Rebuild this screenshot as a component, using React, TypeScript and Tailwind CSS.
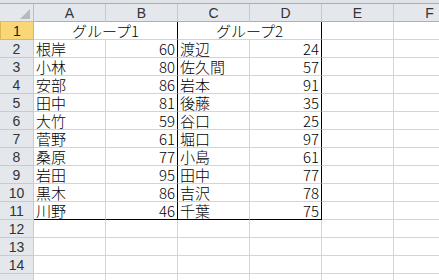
const G1: [string, number][] = [
  ['根岸', 60],
  ['小林', 80],
  ['安部', 86],
  ['田中', 81],
  ['大竹', 59],
  ['菅野', 61],
  ['桑原', 77],
  ['岩田', 95],
  ['黒木', 86],
  ['川野', 46],
]

const G2: [string, number][] = [
  ['渡辺', 24],
  ['佐久間', 57],
  ['岩本', 91],
  ['後藤', 35],
  ['谷口', 25],
  ['堀口', 97],
  ['小島', 61],
  ['田中', 77],
  ['吉沢', 78],
  ['千葉', 75],
]

const COLS = ['A', 'B', 'C', 'D', 'E', 'F']

function RowHead({ n, active }: { n?: number; active?: boolean }) {
  return (
    <div
      className={
        active
          ? 'flex h-[18px] w-[34px] shrink-0 items-center justify-center border border-t-0 border-[#e2b552] bg-[#f9d776] text-[14px] leading-[16px] text-[#222]'
          : 'flex h-[18px] w-[34px] shrink-0 items-center justify-center border-r border-b border-[#c6cbd2] bg-[#e4e8ed] text-[14px] leading-[16px] text-[#333]'
      }
      style={{ fontFamily: '"Liberation Sans", sans-serif' }}
    >
      {n}
    </div>
  )
}

function Cell({
  text,
  right,
  thickR,
  thickB,
}: {
  text?: string | number
  right?: boolean
  thickR?: boolean
  thickB?: boolean
}) {
  return (
    <div
      className={[
        'flex h-[18px] w-[72px] shrink-0 items-center whitespace-nowrap border-r border-b px-[2px] text-[15px] leading-[16px] font-light text-black',
        right ? 'justify-end' : 'justify-start',
        thickR ? 'border-r-black' : 'border-r-[#d4d4d4]',
        thickB ? 'border-b-black' : 'border-b-[#d4d4d4]',
      ].join(' ')}
    >
      {text}
    </div>
  )
}

export default function App() {
  return (
    <div
      className="h-[280px] w-[439px] overflow-hidden bg-white"
      style={{ fontFamily: '"Noto Sans CJK JP", "Liberation Sans", sans-serif' }}
    >
      <div className="h-[4px] border-b border-[#a7b0bb] bg-[#dfe3e8]" />
      <div className="flex h-[18px]">
        <div className="relative h-[18px] w-[34px] shrink-0 border-r border-b border-[#b8bec6] bg-[#e4e8ed]">
          <svg className="absolute right-[3px] bottom-[2px]" width="10" height="10" viewBox="0 0 10 10">
            <polygon points="10,0 10,10 0,10" fill="#b5bac1" />
          </svg>
        </div>
        {COLS.map((c) => (
          <div
            key={c}
            className="flex h-[18px] w-[72px] shrink-0 items-center justify-center border-r border-b border-r-[#c6cbd2] border-b-[#a7b0bb] bg-[#e4e8ed] text-[14px] leading-[16px] text-[#333]"
            style={{ fontFamily: '"Liberation Sans", sans-serif' }}
          >
            {c}
          </div>
        ))}
      </div>

      <div className="flex">
        <RowHead n={1} active />
        <div className="flex h-[18px] w-[144px] shrink-0 items-center justify-center border-r border-b border-r-black border-b-[#d4d4d4] text-[15px] leading-[16px] font-light">
          グループ1
        </div>
        <div className="flex h-[18px] w-[144px] shrink-0 items-center justify-center border-r border-b border-r-black border-b-[#d4d4d4] text-[15px] leading-[16px] font-light">
          グループ2
        </div>
        <Cell />
        <Cell />
      </div>

      {G1.map(([n1, v1], i) => {
        const [n2, v2] = G2[i]
        const last = i === G1.length - 1
        return (
          <div key={i} className="flex">
            <RowHead n={i + 2} />
            <Cell text={n1} thickB={last} />
            <Cell text={v1} right thickR thickB={last} />
            <Cell text={n2} thickB={last} />
            <Cell text={v2} right thickR thickB={last} />
            <Cell />
            <Cell />
          </div>
        )
      })}

      {[12, 13, 14, 15].map((n) => (
        <div key={n} className="flex">
          <RowHead n={n < 15 ? n : undefined} />
          {COLS.map((c) => (
            <Cell key={c} />
          ))}
        </div>
      ))}
    </div>
  )
}
